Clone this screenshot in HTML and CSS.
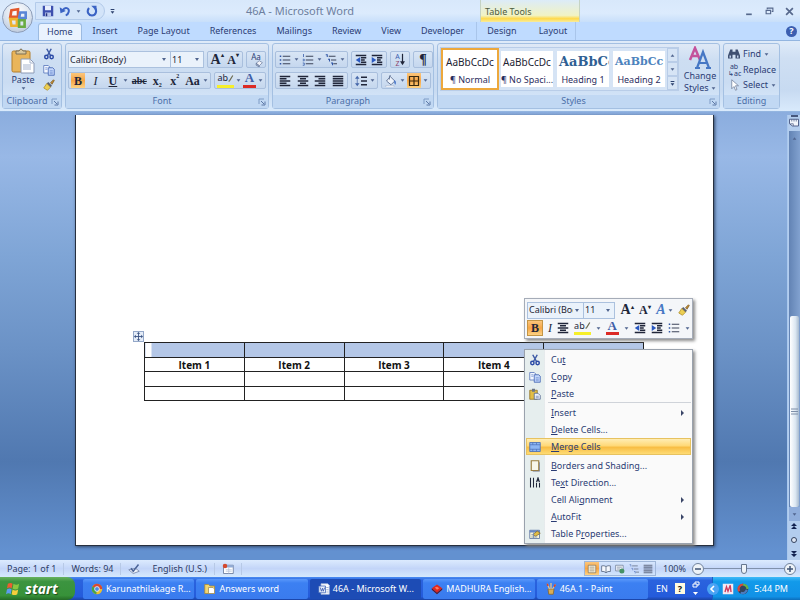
FILE: index.html
```html
<!DOCTYPE html>
<html lang="en">
<head>
  <meta charset="UTF-8">
  <meta name="viewport" content="width=device-width, initial-scale=1.0">
  <title>46A - Microsoft Word</title>
  <link rel="stylesheet" href="styles.css">
</head>
<body>
  <!-- icon sprite -->
  <svg class="sprite" aria-hidden="true">
    <symbol id="save" viewBox="0 0 16 16"><path d="M1 1h13l1 1v13H1z" fill="#3d4fae"/><path d="M4 1h8v6H4z" fill="#e8eefc"/><path d="M4 10h8v5H4z" fill="#b9c6ea"/><path d="M5 11h2v4H5z" fill="#26337c"/></symbol>
    <symbol id="undo" viewBox="0 0 16 16"><path d="M5 7c3-5 9-3 8 2-.4 2-2 4-4 5" fill="none" stroke="#3b63c4" stroke-width="2.6"/><path d="M1 3l1 8 7-3z" fill="#3b63c4"/></symbol>
    <symbol id="redo" viewBox="0 0 16 16"><path d="M4 4c-4 5 0 10 4 10 5 0 7-6 4-10" fill="none" stroke="#3b63c4" stroke-width="2.8"/><path d="M7 1h7v7z" fill="#3b63c4"/></symbol>
    <symbol id="down" viewBox="0 0 8 8"><path d="M1 2h6L4 6z" fill="#50658f"/></symbol>
    <symbol id="more" viewBox="0 0 8 8"><path d="M1 0h6v1.4H1zM1 3.500h6L4 7.500z" fill="#2c416e"/></symbol>
    <symbol id="clipboard" viewBox="0 0 24 26"><rect x="1" y="3" width="18" height="21" rx="1.500" fill="#e9b55a" stroke="#b17e2c"/><path d="M5 6V3h3q2-4 4 0h3v3z" fill="#d9c79b" stroke="#7c6f55"/><path d="M10 11h9l4 4v10H10z" fill="#fff" stroke="#8c9ab5"/><path d="M19 11v4h4M12 17h8M12 19h8M12 21h8" fill="none" stroke="#a7b4cd"/></symbol>
    <symbol id="cut" viewBox="0 0 16 16"><path d="M5 1l5 9M11 1L6 10" stroke="#3d5aa5" stroke-width="2" fill="none"/><circle cx="4.500" cy="12" r="2.200" fill="none" stroke="#2b4aa6" stroke-width="2"/><circle cx="11.500" cy="12" r="2.200" fill="none" stroke="#2b4aa6" stroke-width="2"/></symbol>
    <symbol id="copy" viewBox="0 0 16 16"><path d="M1 2h6l2 2v8H1z" fill="#f3f7ff" stroke="#4c6cb5"/><path d="M7 5h6l2 2v8H7z" fill="#c4d7fb" stroke="#3659ac"/><path d="M3 5h3M3 7h3M9 9h4M9 11h4M9 13h4" stroke="#6f8fd2"/></symbol>
    <symbol id="paste" viewBox="0 0 16 16"><path d="M1 3h10v12H1z" fill="#e2bd45" stroke="#8b6c1c"/><path d="M4 1h4v4H4z" fill="#6b7485"/><path d="M7 7h5l3 3v5H7z" fill="#eef2fb" stroke="#495d86"/><path d="M9 11h4M9 13h4" stroke="#6f81a8"/></symbol>
    <symbol id="brush" viewBox="0 0 16 16"><path d="M10 5l4-4 1 1-3 5z" fill="#c28b35" stroke="#7c5a1e"/><path d="M7 4l5 5-2 2-5-5z" fill="#5a6172"/><path d="M5 6l5 5-4 4-5-3z" fill="#eccf54" stroke="#ad8c27"/></symbol>
    <symbol id="list" viewBox="0 0 16 16"><path d="M1 2h2v2H1zM1 7h2v2H1zM1 12h2v2H1z" fill="#2f55a5"/><path d="M5 3h10M5 8h10M5 13h10" stroke="#3c445a" stroke-width="1.500"/></symbol>
    <symbol id="numlist" viewBox="0 0 16 16"><path d="M2 0v4M1 7h2v2H1M1 12h2v3H1" fill="none" stroke="#2f55a5"/><path d="M5 3h10M5 8h10M5 13h10" stroke="#3c445a" stroke-width="1.500"/></symbol>
    <symbol id="multilist" viewBox="0 0 16 16"><path d="M1 1h2v3M4 7h2v3M8 12h2v3" fill="none" stroke="#2f55a5" stroke-width="1.400"/><path d="M5 3h9M8 8h7M11 13h5" stroke="#3c445a" stroke-width="1.500"/></symbol>
    <symbol id="outdent" viewBox="0 0 16 16"><path d="M1 2h14M8 5h7M8 8h5M8 11h7M1 14h14" stroke="#20263a" stroke-width="1.900"/><path d="M7 4v8L1 8z" fill="#2a58c0"/></symbol>
    <symbol id="indent" viewBox="0 0 16 16"><path d="M1 2h14M8 5h7M8 8h5M8 11h7M1 14h14" stroke="#20263a" stroke-width="1.900"/><path d="M1 4v8l6-4z" fill="#2a58c0"/></symbol>
    <symbol id="left" viewBox="0 0 16 16"><path d="M1 2h14M1 5h9M1 8h14M1 11h9M1 14h14" stroke="#20263a" stroke-width="1.700"/></symbol>
    <symbol id="center" viewBox="0 0 16 16"><path d="M1 2h14M4 5h8M1 8h14M4 11h8M1 14h14" stroke="#20263a" stroke-width="1.700"/></symbol>
    <symbol id="right" viewBox="0 0 16 16"><path d="M1 2h14M6 5h9M1 8h14M6 11h9M1 14h14" stroke="#20263a" stroke-width="1.700"/></symbol>
    <symbol id="justify" viewBox="0 0 16 16"><path d="M1 2h14M1 5h14M1 8h14M1 11h14M1 14h14" stroke="#20263a" stroke-width="1.700"/></symbol>
    <symbol id="spacing" viewBox="0 0 16 16"><path d="M3 1L0 5h6zM3 15l-3-4h6z" fill="#4567a9"/><path d="M3 4v8" stroke="#4567a9"/><path d="M8 3h8M8 8h8M8 13h8" stroke="#20263a" stroke-width="1.700"/></symbol>
    <symbol id="arrowdown" viewBox="0 0 6 16"><path d="M3 1v12" stroke="#20263a" stroke-width="1.500"/><path d="M0 10h6l-3 5z" fill="#20263a"/></symbol>
    <symbol id="bucket" viewBox="0 0 16 16"><path d="M7 2l6 6-5 5-6-5z" fill="#eef3fb" stroke="#5b6d90" stroke-width="1.200"/><path d="M6 6V1h2" fill="none" stroke="#5b6d90"/><path d="M12 7q4 1 2 6-2-1-2-6" fill="#4c78c8"/><path d="M1 14h11v2H1z" fill="#fff" stroke="#8b9cbd" stroke-width=".5"/></symbol>
    <symbol id="border" viewBox="0 0 16 16"><path d="M2 2h12v12H2zM8 2v12M2 8h12" fill="none" stroke="#3a2a10" stroke-width="1.600"/></symbol>
    <symbol id="eraser" viewBox="0 0 18 16"><path d="M6 10l5-4 5 3-5 5z" fill="#f4f4fa" stroke="#5b6d90"/><path d="M6 10v3l5 3v-2z" fill="#aab7d2" stroke="#5b6d90"/></symbol>
    <symbol id="pen" viewBox="0 0 10 12"><path d="M8 1L3 9l-2 2" fill="none" stroke="#6d6c52" stroke-width="2"/></symbol>
    <symbol id="launch" viewBox="0 0 8 8"><path d="M1 6V1h5" fill="none" stroke="#7f9cc6"/><path d="M3 3l3 3M7 3.500V7H3.500" fill="none" stroke="#5d79a6"/></symbol>
    <symbol id="binoc" viewBox="0 0 16 16"><path d="M3 2h3v3h4V2h3l3 8v4h-6V9H6v5H0v-4z" fill="#3f5071"/><path d="M2 10h2v3H2zM12 10h2v3h-2z" fill="#c3d3ee"/></symbol>
    <symbol id="cursor" viewBox="0 0 16 16"><path d="M5 1v12l3-3 2 5 2-1-2-5h4z" fill="#fff" stroke="#6d7c98"/></symbol>
    <symbol id="merge" viewBox="0 0 16 16"><path d="M1 2h14v12H1z" fill="#8db6f3" stroke="#3d65b4"/><path d="M1 5h14M1 11h14M5 2v3M10 2v3M5 11v3M10 11v3" stroke="#4e73b9"/></symbol>
    <symbol id="shade" viewBox="0 0 16 16"><path d="M3 1h10v13H3z" fill="#f8f6ea" stroke="#9c7d3d" stroke-width="1.500"/><path d="M14 3v12H5" fill="none" stroke="#7a7f91"/></symbol>
    <symbol id="textdir" viewBox="0 0 16 16"><path d="M2 1v13M6 1v13M10 8v6M14 8v6M10 7l2-6 2 6M11 5h2" fill="none" stroke="#20263a" stroke-width="1.400"/></symbol>
    <symbol id="props" viewBox="0 0 16 16"><path d="M1 3h13v11H1z" fill="#fbf5d4" stroke="#4d679b"/><path d="M1 3h13v3H1z" fill="#6787c4"/><path d="M5 9l6-5 4 3-6 4z" fill="#e2bd45" stroke="#78663a"/><path d="M3 9h3M3 12h8M6 6v8" stroke="#7289b5"/></symbol>
    <symbol id="proof" viewBox="0 0 16 16"><path d="M1 9l6 5 8-3-5-4z" fill="#eef3fb" stroke="#6a7ba0"/><path d="M4 7l3 4 7-9" fill="none" stroke="#4a6397" stroke-width="2"/></symbol>
    <symbol id="macro" viewBox="0 0 16 16"><path d="M2 3h13v11H2z" fill="#fff" stroke="#5b6d90"/><path d="M2 3h13v3H2z" fill="#91abd7"/><path d="M5 9h8M5 11h8M9 6v8" stroke="#b6c2d8"/><circle cx="4" cy="4" r="3" fill="#d5492e"/></symbol>
    <symbol id="page" viewBox="0 0 16 16"><path d="M2 2h12v12H2z" fill="#fffbe9" stroke="#6d614b"/><path d="M4 5h8M4 8h8M4 11h8" stroke="#6d614b"/></symbol>
    <symbol id="book" viewBox="0 0 16 16"><path d="M1 3q4-1 7 1 3-2 7-1v9q-4-1-7 2-3-3-7-2zM8 4v10" fill="#f5f8fd" stroke="#596983" stroke-width="1.300"/></symbol>
    <symbol id="web" viewBox="0 0 16 16"><path d="M1 2h12v9H1z" fill="#f5f8fd" stroke="#596983"/><path d="M3 5h8M3 8h5" stroke="#596983"/><circle cx="11" cy="11" r="4" fill="#469266"/></symbol>
    <symbol id="chrome" viewBox="0 0 16 16"><circle cx="8" cy="8" r="7" fill="#e9c02f"/><path d="M8 8L2 4.500A7 7 0 0 1 15 8z" fill="#d94732"/><path d="M8 8L2 4.500A7 7 0 0 0 7 15z" fill="#46a24a"/><circle cx="8" cy="8" r="3.200" fill="#4a8ae8" stroke="#fff"/></symbol>
    <symbol id="folder" viewBox="0 0 16 16"><path d="M1 4V2h5l2 2h6v10H1z" fill="#f3d671" stroke="#ac8831"/><path d="M6 6h6l2 2v6H6z" fill="#fff" stroke="#9c8852"/></symbol>
    <symbol id="word" viewBox="0 0 16 16"><path d="M4 1h9l2 2v12H4z" fill="#fff" stroke="#a9b9db"/><path d="M1 4h9v9H1z" fill="#e8effc" stroke="#375fb3"/><path d="M3 6l1.500 5L6 7l1 4 2-5" fill="none" stroke="#2e50a8"/><path d="M11 6h3M11 9h3M11 12h3" stroke="#8299ca"/></symbol>
    <symbol id="gem" viewBox="0 0 16 16"><path d="M1 7l7-5 7 5-7 6z" fill="#e2261b"/><path d="M1 7l7 6v2L1 9zM15 7l-7 6v2l7-6z" fill="#5e1420"/><path d="M5 6l3-1 3 2-3 2z" fill="#ff7a5c"/></symbol>
    <symbol id="paint" viewBox="0 0 16 16"><path d="M4 8h8l-1 7H5z" fill="#d9ad56" stroke="#8a6424"/><path d="M6 8L3 1M8 8V0M10 8l4-6" stroke="#e3c28e" stroke-width="1.800"/><path d="M3 1l1 3M14 2l-2 3" stroke="#d3452f" stroke-width="2"/></symbol>
    <symbol id="ruler" viewBox="0 0 16 16"><path d="M2 3h12v9H6l-4-3z" fill="#f1f5fc" stroke="#50608a" stroke-width="1.300"/><path d="M5 3v3M8 3v3M11 3v3M3 9h4v3" stroke="#50608a" fill="none"/></symbol>
  </svg>

  <div class="screen">
    <header class="titlebar">
      <button class="office" aria-label="Office Button">
        <svg viewBox="0 0 20 20" fill="none" stroke-width="2.400">
          <path d="M4 3l6-1v7H3z" stroke="#e2582c"/>
          <path d="M12 5h5v5h-6z" stroke="#5b86d6"/>
          <path d="M3 11h6v6H4z" stroke="#eeb22d"/>
          <path d="M11 12h5v6h-5z" stroke="#6aac43"/>
        </svg>
      </button>
      <div class="quick">
        <button aria-label="Save"><svg class="ico"><use href="#save"/></svg></button>
        <button aria-label="Undo"><svg class="ico"><use href="#undo"/></svg></button>
        <button aria-label="Undo list"><svg class="tiny"><use href="#down"/></svg></button>
        <button aria-label="Repeat"><svg class="ico"><use href="#redo"/></svg></button>
      </div>
      <button class="customize" aria-label="Customize"><svg class="tiny"><use href="#more"/></svg></button>
      <h1>46A - Microsoft Word</h1>
      <div class="context-title">Table Tools</div>
      <div class="winbtns">
        <button aria-label="Minimize"><svg class="win" viewBox="0 0 8 8"><path d="M1 6.500h5" stroke="#56688c" stroke-width="1.500"/></svg></button>
        <button aria-label="Restore"><svg class="win" viewBox="0 0 8 8"><path d="M2 2V1h5v3H6M1 3h4v3H1z" fill="none" stroke="#56688c"/></svg></button>
        <button aria-label="Close"><svg class="win" viewBox="0 0 8 8"><path d="M1 1l6 6M7 1L1 7" stroke="#56688c" stroke-width="1.500"/></svg></button>
      </div>
    </header>

    <nav class="tabs">
      <button class="active">Home</button>
      <button>Insert</button>
      <button>Page Layout</button>
      <button>References</button>
      <button>Mailings</button>
      <button>Review</button>
      <button>View</button>
      <button>Developer</button>
      <div class="context-tabs">
        <button>Design</button>
        <button>Layout</button>
      </div>
      <button class="help" aria-label="Help">?</button>
    </nav>

    <section class="ribbon">
      <div class="group clip">
        <div class="group-body">
          <button class="big">
            <svg class="large"><use href="#clipboard"/></svg>
            <span>Paste</span>
            <svg class="tiny"><use href="#down"/></svg>
          </button>
          <div class="stack">
            <button aria-label="Cut"><svg class="ico"><use href="#cut"/></svg></button>
            <button aria-label="Copy"><svg class="ico"><use href="#copy"/></svg></button>
            <button aria-label="Format Painter"><svg class="ico"><use href="#brush"/></svg></button>
          </div>
        </div>
        <div class="group-label"><span>Clipboard</span><svg class="launch"><use href="#launch"/></svg></div>
      </div>

      <div class="group font">
        <div class="group-body rows">
          <div class="row">
            <div class="combos">
              <div class="combo name"><select aria-label="Font"><option>Calibri (Body)</option></select></div>
              <div class="combo size"><select aria-label="Font Size"><option>11</option></select></div>
            </div>
            <div class="set">
              <button class="letter grow" aria-label="Grow Font">A<sup>▴</sup></button>
              <button class="letter" aria-label="Shrink Font">A<sup>▾</sup></button>
            </div>
            <div class="set">
              <button class="clear" aria-label="Clear Formatting"><span>Aa</span><svg><use href="#eraser"/></svg></button>
            </div>
          </div>
          <div class="row">
            <div class="set wide">
              <button class="letter on">B</button>
              <button class="letter"><i>I</i></button>
              <button class="letter"><u>U</u></button>
              <svg class="tiny"><use href="#down"/></svg>
              <button class="letter small"><s>abc</s></button>
              <button class="letter">x<sub>2</sub></button>
              <button class="letter">x<sup>2</sup></button>
              <button class="letter">Aa</button>
              <svg class="tiny"><use href="#down"/></svg>
            </div>
            <div class="set">
              <button class="mark hl" aria-label="Highlight">ab<svg><use href="#pen"/></svg></button>
              <svg class="tiny"><use href="#down"/></svg>
              <button class="mark fc" aria-label="Font Color">A</button>
              <svg class="tiny"><use href="#down"/></svg>
            </div>
          </div>
        </div>
        <div class="group-label"><span>Font</span><svg class="launch"><use href="#launch"/></svg></div>
      </div>

      <div class="group para">
        <div class="group-body rows">
          <div class="row">
            <div class="set wide">
              <button aria-label="Bullets"><svg class="ico"><use href="#list"/></svg></button>
              <svg class="tiny"><use href="#down"/></svg>
              <button aria-label="Numbering"><svg class="ico"><use href="#numlist"/></svg></button>
              <svg class="tiny"><use href="#down"/></svg>
              <button aria-label="Multilevel List"><svg class="ico"><use href="#multilist"/></svg></button>
              <svg class="tiny"><use href="#down"/></svg>
            </div>
            <div class="set">
              <button aria-label="Decrease Indent"><svg class="ico"><use href="#outdent"/></svg></button>
              <button aria-label="Increase Indent"><svg class="ico"><use href="#indent"/></svg></button>
            </div>
            <div class="set">
              <button class="sort" aria-label="Sort"><span>A<br><b>Z</b></span><svg><use href="#arrowdown"/></svg></button>
            </div>
            <div class="set"><button class="letter pilcrow">¶</button></div>
          </div>
          <div class="row">
            <div class="set wide">
              <button aria-label="Align Left"><svg class="ico"><use href="#left"/></svg></button>
              <button aria-label="Center"><svg class="ico"><use href="#center"/></svg></button>
              <button aria-label="Align Right"><svg class="ico"><use href="#right"/></svg></button>
              <button aria-label="Justify"><svg class="ico"><use href="#justify"/></svg></button>
            </div>
            <div class="set">
              <button aria-label="Line Spacing"><svg class="ico"><use href="#spacing"/></svg></button>
              <svg class="tiny"><use href="#down"/></svg>
            </div>
            <div class="set">
              <button aria-label="Shading"><svg class="ico"><use href="#bucket"/></svg></button>
              <svg class="tiny"><use href="#down"/></svg>
              <button class="on" aria-label="Borders"><svg class="ico"><use href="#border"/></svg></button>
              <svg class="tiny"><use href="#down"/></svg>
            </div>
          </div>
        </div>
        <div class="group-label"><span>Paragraph</span><svg class="launch"><use href="#launch"/></svg></div>
      </div>

      <div class="group styles">
        <div class="group-body">
          <div class="gallery">
            <button class="style picked"><span class="sample">AaBbCcDc</span><span>¶ Normal</span></button>
            <button class="style"><span class="sample">AaBbCcDc</span><span>¶ No Spaci...</span></button>
            <button class="style"><span class="sample h1">AaBbCc</span><span>Heading 1</span></button>
            <button class="style"><span class="sample h2">AaBbCc</span><span>Heading 2</span></button>
            <div class="scroller">
              <button aria-label="Previous styles"><svg class="tiny flip"><use href="#down"/></svg></button>
              <button aria-label="Next styles"><svg class="tiny"><use href="#down"/></svg></button>
              <button aria-label="More styles"><svg class="tiny"><use href="#more"/></svg></button>
            </div>
          </div>
          <button class="change">
            <svg class="twin" viewBox="0 0 24 24"><path d="M2 14L7 2l5 12M4 10h6" fill="none" stroke="#c4529c" stroke-width="2.500"/><path d="M9 22l6-16 6 16M11 17h8M7 22h5M18 22h5" fill="none" stroke="#4677c4" stroke-width="2.200"/></svg>
            <span>Change</span>
            <span>Styles <svg class="tiny"><use href="#down"/></svg></span>
          </button>
        </div>
        <div class="group-label"><span>Styles</span><svg class="launch"><use href="#launch"/></svg></div>
      </div>

      <div class="group edit">
        <div class="group-body">
          <button><svg class="ico"><use href="#binoc"/></svg>Find <svg class="tiny"><use href="#down"/></svg></button>
          <button><span class="swap">ab<br>↳ac</span>Replace</button>
          <button><svg class="ico"><use href="#cursor"/></svg>Select <svg class="tiny"><use href="#down"/></svg></button>
        </div>
        <div class="group-label"><span>Editing</span></div>
      </div>
    </section>

    <main class="workspace">
      <div class="canvas">
        <article class="paper">
          <div class="table-wrap">
            <span class="move"><svg viewBox="0 0 10 10"><path d="M5 1v8M1 5h8" stroke="#3b5382"/><path d="M5 0l2 2H3zM5 10l2-2H3zM0 5l2-2v4zM10 5L8 3v4z" fill="#3b5382"/></svg></span>
            <table>
              <tr class="selected"><td></td><td></td><td></td><td></td><td></td></tr>
              <tr><th>Item 1</th><th>Item 2</th><th>Item 3</th><th>Item 4</th><th></th></tr>
              <tr class="tall"><td></td><td></td><td></td><td></td><td></td></tr>
              <tr><td></td><td></td><td></td><td></td><td></td></tr>
            </table>
          </div>

          <div class="popup">
            <div class="minibar">
              <div class="row">
                <div class="combos">
                  <div class="combo name"><select aria-label="Font"><option>Calibri (Body)</option></select></div>
                  <div class="combo size"><select aria-label="Font Size"><option>11</option></select></div>
                </div>
                <button class="letter grow" aria-label="Grow Font">A<sup>▴</sup></button>
                <button class="letter" aria-label="Shrink Font">A<sup>▾</sup></button>
                <button class="letter quickstyle" aria-label="Styles">A<svg class="tiny"><use href="#down"/></svg></button>
                <button aria-label="Format Painter"><svg class="ico"><use href="#brush"/></svg></button>
              </div>
              <div class="row">
                <button class="letter on">B</button>
                <button class="letter"><i>I</i></button>
                <button aria-label="Center"><svg class="ico"><use href="#center"/></svg></button>
                <button class="mark hl" aria-label="Highlight">ab<svg><use href="#pen"/></svg></button>
                <svg class="tiny"><use href="#down"/></svg>
                <button class="mark fc" aria-label="Font Color">A</button>
                <svg class="tiny"><use href="#down"/></svg>
                <button aria-label="Decrease Indent"><svg class="ico"><use href="#outdent"/></svg></button>
                <button aria-label="Increase Indent"><svg class="ico"><use href="#indent"/></svg></button>
                <button aria-label="Bullets"><svg class="ico"><use href="#list"/></svg></button>
                <svg class="tiny"><use href="#down"/></svg>
              </div>
            </div>
            <div class="menu" role="menu">
              <button role="menuitem"><svg class="ico"><use href="#cut"/></svg><span>Cu<u>t</u></span></button>
              <button role="menuitem"><svg class="ico"><use href="#copy"/></svg><span><u>C</u>opy</span></button>
              <button role="menuitem"><svg class="ico"><use href="#paste"/></svg><span><u>P</u>aste</span></button>
              <hr>
              <button role="menuitem" class="sub"><span><u>I</u>nsert</span></button>
              <button role="menuitem"><span><u>D</u>elete Cells...</span></button>
              <button role="menuitem" class="hot"><svg class="ico"><use href="#merge"/></svg><span><u>M</u>erge Cells</span></button>
              <hr class="blank">
              <button role="menuitem"><svg class="ico"><use href="#shade"/></svg><span><u>B</u>orders and Shading...</span></button>
              <button role="menuitem"><svg class="ico"><use href="#textdir"/></svg><span>Te<u>x</u>t Direction...</span></button>
              <button role="menuitem" class="sub"><span>Cell Ali<u>g</u>nment</span></button>
              <button role="menuitem" class="sub"><span><u>A</u>utoFit</span></button>
              <button role="menuitem"><svg class="ico"><use href="#props"/></svg><span>Table P<u>r</u>operties...</span></button>
            </div>
          </div>
        </article>
      </div>
      <div class="scrollbar">
        <div class="split"></div>
        <button aria-label="View Ruler"><svg class="ico"><use href="#ruler"/></svg></button>
        <div class="track">
          <button aria-label="Scroll up"><svg class="tiny flip"><use href="#down"/></svg></button>
          <div class="thumb"><svg viewBox="0 0 7 7"><path d="M0 1h7M0 3.500h7M0 6h7" stroke="#7d8ea8"/></svg></div>
          <button class="end" aria-label="Scroll down"><svg class="tiny"><use href="#down"/></svg></button>
        </div>
        <button class="browse" aria-label="Previous Page"><svg viewBox="0 0 8 8"><path d="M4 0l3 3H1zM4 3l3 3H1z" fill="#122250"/></svg></button>
        <button class="browse" aria-label="Select Browse Object"><svg viewBox="0 0 8 8"><circle cx="4" cy="4" r="2.500" fill="#dfe7f4" stroke="#33425f"/></svg></button>
        <button class="browse" aria-label="Next Page"><svg viewBox="0 0 8 8"><path d="M4 5L1 2h6zM4 8L1 5h6z" fill="#122250"/></svg></button>
      </div>
    </main>

    <footer class="statusbar">
      <span>Page: 1 of 1</span>
      <span>Words: 94</span>
      <span><svg class="ico"><use href="#proof"/></svg></span>
      <span class="language">English (U.S.)</span>
      <span><svg class="ico"><use href="#macro"/></svg></span>
      <div class="views">
        <button class="on" aria-label="Print Layout"><svg class="ico"><use href="#page"/></svg></button>
        <button aria-label="Full Screen Reading"><svg class="ico"><use href="#book"/></svg></button>
        <button aria-label="Web Layout"><svg class="ico"><use href="#web"/></svg></button>
        <button aria-label="Outline"><svg class="ico faded"><use href="#multilist"/></svg></button>
        <button aria-label="Draft"><svg class="ico faded"><use href="#justify"/></svg></button>
      </div>
      <label for="zoom">100%</label>
      <button class="round" aria-label="Zoom out"><svg viewBox="0 0 8 8"><path d="M1 4h6" stroke="#3f5374" stroke-width="1.500"/></svg></button>
      <input type="range" id="zoom" min="0" max="100" value="50">
      <button class="round" aria-label="Zoom in"><svg viewBox="0 0 8 8"><path d="M1 4h6M4 1v6" stroke="#3f5374" stroke-width="1.500"/></svg></button>
    </footer>

    <div class="taskbar">
      <button class="start">
        <svg viewBox="0 0 16 16"><path d="M2 3q3-2 5 0L6 8Q4 6 1 8z" fill="#ee5b32"/><path d="M8 3q3 2 6 0l-1 5q-3 2-6 0z" fill="#8ac640"/><path d="M1 9q3-2 5 0l-1 5q-2-2-5 0z" fill="#5d9bee"/><path d="M7 9q3 2 6 0l-1 5q-3 2-6 0z" fill="#f5ce3c"/></svg>
        start
      </button>
      <div class="tasks">
        <button><svg class="ico"><use href="#chrome"/></svg>Karunathilakage R...</button>
        <button><svg class="ico"><use href="#folder"/></svg>Answers word</button>
        <button class="current"><svg class="ico"><use href="#word"/></svg>46A - Microsoft W...</button>
        <button><svg class="ico"><use href="#gem"/></svg>MADHURA English...</button>
        <button><svg class="ico"><use href="#paint"/></svg>46A.1 - Paint</button>
      </div>
      <div class="lang">
        <span>EN</span>
        <span class="q">?</span>
        <svg viewBox="0 0 8 16"><path d="M3 3V1h4v3H5M1 3h4v3H1z" fill="none" stroke="#fff"/><path d="M1 11h5l-2.500 3z" fill="#fff"/></svg>
      </div>
      <div class="tray">
        <button class="expand" aria-label="Show hidden icons"><svg viewBox="0 0 8 8"><path d="M5 1L2 4l3 3" fill="none" stroke="#fff" stroke-width="1.600"/></svg></button>
        <svg class="ico" viewBox="0 0 16 16"><path d="M1 1h14v14H1z" fill="#f3e9f2"/><path d="M4 12l2-7 2 6 3-8 1 9" fill="none" stroke="#cf3a5c" stroke-width="1.800"/></svg>
        <svg class="ico" viewBox="0 0 16 16"><circle cx="8" cy="8" r="7" fill="#31445c"/><path d="M3 11A6 6 0 0 1 8 2" fill="none" stroke="#d8493a" stroke-width="3"/><path d="M8 2q6 1 6 6" fill="none" stroke="#67b14a" stroke-width="3"/><path d="M13 9q-2 6-8 4" fill="none" stroke="#4a7bc0" stroke-width="3"/></svg>
        <time>5:44 PM</time>
      </div>
    </div>
  </div>
</body>
</html>
```
FILE: styles.css
```css
* {
  box-sizing: border-box;
}

body {
  margin: 0;
  font-family: "Noto Sans", "Open Sans", sans-serif;
  font-size: 9px;
  line-height: 12px;
  color: #2b3c74;
}

button,
select {
  font: inherit;
  color: inherit;
  background: none;
  border: 0;
  padding: 0;
  margin: 0;
  white-space: nowrap;
}

button {
  display: flex;
  align-items: center;
  justify-content: center;
}

.sprite {
  display: none;
}

.ico {
  width: 12px;
  height: 12px;
  flex: none;
}

.tiny {
  width: 5px;
  height: 5px;
  flex: none;
}

.flip {
  transform: rotate(180deg);
}

.screen {
  display: flex;
  flex-direction: column;
  min-height: 100vh;
  background: #bfdbff;
}

/* title bar */
.titlebar {
  position: relative;
  display: flex;
  align-items: center;
  height: 22px;
  padding-left: 35px;
  background: linear-gradient(#d8e8fb, #dcebfd 60%, #c8dffa);
}

.office {
  position: absolute;
  z-index: 2;
  left: 2px;
  top: 2px;
  width: 31px;
  height: 31px;
  border-radius: 50%;
  border: 1px solid #8d9db8;
  background: radial-gradient(circle at 50% 30%, #fff, #dde5f0 50%, #aebdd3);
}

.office svg {
  width: 22px;
  height: 22px;
}

.quick {
  display: flex;
  align-items: center;
  gap: 5px;
  width: 70px;
  height: 18px;
  padding-left: 6px;
  border: 1px solid #b3cbea;
  border-radius: 0 9px 9px 0;
  background: #d3e4f9;
}

.customize {
  width: 15px;
}

.titlebar h1 {
  flex: 1;
  margin: 0;
  font-size: 11px;
  font-weight: normal;
  line-height: 20px;
  text-align: center;
  color: #6d7f9f;
}

.context-title {
  width: 100px;
  height: 22px;
  padding: 6px 4px 0;
  color: #4f5c40;
  border: solid #c5d3c4;
  border-width: 0 1px;
  background: linear-gradient(#dcebf8, #f1f3c4 70%, #ffd94a 85%, #f8ec9e);
}

.winbtns {
  display: flex;
  justify-content: flex-end;
  gap: 11px;
  width: 220px;
  padding-right: 6px;
}

.win {
  width: 9px;
  height: 9px;
}

/* tabs */
.tabs {
  display: flex;
  height: 18px;
  padding-left: 36px;
  background: #bfdbff;
}

.tabs button {
  padding: 0 10px;
}

.tabs .active {
  margin: 1px 1px 0 2px;
  padding: 0 8px;
  border: 1px solid #9cbbe2;
  border-bottom: 0;
  border-radius: 3px 3px 0 0;
  background: #eaf3fe;
}

.context-tabs {
  display: flex;
  gap: 2px;
  width: 100px;
  margin-left: 2px;
  border: solid #a9c5ea;
  border-width: 0 1px;
}

.tabs .help {
  align-self: center;
  width: 11px;
  height: 11px;
  margin-left: auto;
  margin-right: 3px;
  padding: 0;
  border-radius: 50%;
  font-weight: bold;
  color: #fff;
  background: #3b5eb0;
}

/* ribbon */
.ribbon {
  display: flex;
  gap: 3px;
  height: 72px;
  padding: 2px;
  border: 1px solid #93b5e0;
  border-width: 1px 0;
  background: linear-gradient(#dfebf9, #cfdff3 25%, #c7daf1 70%, #d9eafc);
}

.group {
  display: flex;
  flex-direction: column;
  border: 1px solid #a4c0e2;
  border-radius: 3px;
  background: linear-gradient(#dfe9f6, #cddef2 25%, #cadcf2 60%, #d9e9fb);
}

.group-body {
  flex: 1;
  display: flex;
  min-height: 0;
}

.group-label {
  display: flex;
  height: 13px;
  color: #4c6fa8;
  background: #c1d8f3;
}

.group-label span {
  flex: 1;
  text-align: center;
}

.launch {
  align-self: center;
  width: 8px;
  height: 8px;
  margin-right: 2px;
}

.clip {
  width: 60px;
}

.font {
  width: 204px;
}

.para {
  width: 162px;
}

.styles {
  width: 283px;
}

.edit {
  width: 57px;
}

.big {
  flex-direction: column;
  width: 40px;
}

.large {
  width: 24px;
  height: 26px;
}

.stack {
  display: flex;
  flex-direction: column;
  justify-content: space-evenly;
}

.rows {
  flex-direction: column;
  justify-content: space-evenly;
  padding: 3px 2px 2px;
}

.row {
  display: flex;
  align-items: center;
  gap: 3px;
}

.set {
  display: flex;
  align-items: center;
  gap: 2px;
  height: 17px;
  padding: 0 2px;
  border: 1px solid #a9bfdd;
  border-radius: 2px;
  background: linear-gradient(#d8e5f5, #c5d7ee);
}

.set button {
  height: 15px;
  min-width: 14px;
}

.set.wide {
  flex: 1;
  justify-content: space-between;
}

.combos {
  display: flex;
  flex: 1;
}

.combo {
  position: relative;
  border: 1px solid #abc1de;
  background: #eaf2fb;
}

.combo + .combo {
  border-left: 0;
}

.combo::after {
  content: "";
  position: absolute;
  right: 4px;
  top: 6px;
  border: solid transparent;
  border-width: 3px 2px 0;
  border-top-color: #50658f;
}

.combo select {
  appearance: none;
  display: block;
  width: 100%;
  height: 15px;
  padding: 0 10px 0 1px;
  color: #1d2433;
}

.combo.name {
  flex: 1;
}

.combo.size {
  width: 33px;
}

.letter {
  font-family: "Liberation Serif", serif;
  font-size: 12px;
  font-weight: bold;
  color: #20263a;
}

.letter i {
  font-weight: normal;
}

.letter sup,
.letter sub {
  font-size: 6px;
  line-height: 6px;
}

.letter sup {
  align-self: flex-start;
}

.letter sub {
  align-self: flex-end;
}

.letter.grow {
  font-size: 14px;
}

.letter.small {
  font-size: 10px;
}

.letter.pilcrow {
  font-size: 14px;
}

.on {
  background: linear-gradient(#fbc67c, #f6a546 50%, #fdd283);
}

.clear {
  position: relative;
}

.clear span {
  font-size: 8px;
  line-height: 10px;
  align-self: start;
}

.clear svg {
  position: absolute;
  left: 3px;
  bottom: 0;
  width: 12px;
  height: 10px;
}

.mark {
  height: 14px;
  line-height: 10px;
  padding-bottom: 2px;
}

.mark svg {
  width: 6px;
  height: 9px;
}

.hl {
  color: #20263a;
  border-bottom: 3px solid #f6ef2a;
}

.fc {
  font-family: "Liberation Serif", serif;
  font-size: 13px;
  font-weight: bold;
  color: #3f5ea8;
  border-bottom: 3px solid #dc2a25;
}

.mark.fc {
  min-width: 13px;
}

.sort span {
  font-size: 7px;
  line-height: 7px;
  color: #3b5eb0;
}

.sort b {
  font-weight: normal;
  color: #8c3f6b;
}

.sort svg {
  width: 5px;
  height: 13px;
}

/* style gallery */
.gallery {
  flex: 1;
  display: flex;
  min-width: 0;
  margin: 3px 2px 4px;
  border: 1px solid #b9cde8;
  background: #d6e4f5;
}

.style {
  flex: 1;
  flex-direction: column;
  justify-content: space-around;
  min-width: 0;
  margin: 3px 2px;
  background: #fff;
  color: #2b2d5e;
  overflow: hidden;
}

.style.picked {
  flex-grow: 1;
  margin: 0;
  padding: 1px;
  border: 2px solid #eda83c;
}

.sample {
  width: 100%;
  padding-left: 2px;
  overflow: hidden;
  font-size: 10px;
  line-height: 18px;
  text-align: left;
  color: #1d2433;
}

.sample.h1 {
  font: bold 13px/18px "DejaVu Serif", serif;
  color: #2f5f93;
}

.sample.h2 {
  font: bold 11px/18px "DejaVu Serif", serif;
  color: #4d83bd;
}

.scroller {
  display: flex;
  flex-direction: column;
  width: 11px;
}

.scroller button {
  flex: 1;
  border: 1px solid #b9cde8;
}

.change {
  flex: none;
  flex-direction: column;
  width: 38px;
}

.twin {
  width: 24px;
  height: 24px;
}

.edit .group-body {
  flex-direction: column;
  justify-content: space-between;
  padding: 4px 0 4px 4px;
}

.edit button {
  justify-content: flex-start;
  gap: 3px;
}

.swap {
  width: 12px;
  font-size: 7px;
  line-height: 7px;
}

/* document area */
.workspace {
  flex: 1;
  display: flex;
  padding-top: 3px;
  background: linear-gradient(#8badde, #98b8e6 10%, #7fa5d6 32%, #6b92c6 53%, #5078b0 78%, #6391d0 98%);
}

.canvas {
  flex: 1;
  padding: 0 73px 14px 75px;
}

.paper {
  position: relative;
  height: 100%;
  padding: 227px 69px 0 68px;
  border: 1px solid #27303f;
  border-top: 0;
  background: #fff;
  box-shadow: 1px 1px 3px #33486b;
}

.table-wrap {
  position: relative;
}

.move {
  position: absolute;
  left: -11px;
  top: -11px;
  width: 11px;
  height: 11px;
  border: 1px solid #94a8c9;
  background: #e5edf8;
}

.move svg {
  display: block;
  width: 9px;
  height: 9px;
}

table {
  width: 100%;
  table-layout: fixed;
  border-collapse: collapse;
  font-family: "Open Sans", sans-serif;
  font-size: 10px;
  color: #111;
}

td,
th {
  height: 14px;
  padding: 0;
  line-height: 12px;
  border: 1px solid #222;
}

.selected td,
.tall td {
  height: 15px;
}

.selected td {
  background: #b4c7e7;
}

.selected td:first-child {
  background: linear-gradient(to right, #fff 6px, #b4c7e7 6px);
}

/* mini toolbar and context menu, floating over the page */
.popup {
  position: absolute;
  left: 448px;
  top: 183px;
  width: 169px;
}

.minibar {
  height: 41px;
  margin-bottom: 10px;
  padding: 2px;
  border: 1px solid #a5acb8;
  background: #f4f6f9;
  box-shadow: 2px 2px 3px #8c8c8c;
}

.minibar .row {
  height: 18px;
  gap: 2px;
  justify-content: space-between;
}

.minibar .combos {
  flex: none;
  width: 88px;
}

.minibar .combo.size {
  width: 31px;
}

.minibar .on {
  width: 16px;
  height: 16px;
  border: 1px solid #c49545;
}

.minibar .quickstyle {
  font-size: 14px;
  font-style: italic;
  color: #4677c4;
  gap: 2px;
}

.menu {
  padding: 1px;
  border: 1px solid #9aa2ad;
  background: linear-gradient(to right, #e6eeee 19px, #d3dbdf 19px, #fafafa 20px);
  box-shadow: 2px 2px 3px #8c8c8c;
}

.menu button {
  position: relative;
  width: 100%;
  height: 17px;
  justify-content: flex-start;
}

.menu .ico {
  margin-left: 3px;
  margin-right: -15px;
}

.menu span {
  margin-left: 25px;
}

.menu .sub::after {
  content: "";
  margin-left: auto;
  margin-right: 7px;
  border: solid transparent;
  border-width: 3px 0 3px 3px;
  border-left-color: #3b4668;
}

.menu .hot {
  background: linear-gradient(#fff0bd, #ffd978 45%, #f8bd44 55%, #ffe07c);
  outline: 1px solid #e7c260;
  outline-offset: -1px;
}

.menu hr {
  height: 1px;
  margin: 0 0 1px 22px;
  border: 0;
  background: #cfd3d9;
}

.menu .blank {
  background: none;
}

/* vertical scroll bar */
.scrollbar {
  display: flex;
  flex-direction: column;
  align-items: center;
  width: 13px;
  border-left: 1px solid #a9c8ee;
  background: #b3cdee;
}

.split {
  width: 7px;
  height: 2px;
  background: #46577d;
}

.track {
  flex: 1;
  display: flex;
  flex-direction: column;
  align-items: center;
  width: 11px;
  margin-top: 2px;
  background: linear-gradient(to right, #6283b4, #82a2d0);
}

.track button {
  height: 14px;
}

.track .end {
  width: 100%;
  background: #8faddb;
}

.thumb {
  display: flex;
  align-items: center;
  justify-content: center;
  height: 49%;
  width: 9px;
  margin-top: auto;
  border-radius: 2px;
  background: linear-gradient(to right, #fff, #dce7f2 60%, #a7bacf);
}

.thumb svg {
  width: 7px;
  height: 7px;
}

.browse svg {
  width: 8px;
  height: 8px;
  margin: 2px 0 3px;
}

/* status bar */
.statusbar {
  display: flex;
  align-items: center;
  height: 17px;
  padding: 0 4px 0 0;
  background: linear-gradient(#dcebfe, #c3d5f8 50%, #d5e9fd);
  color: #2d3c66;
}

.statusbar > span {
  display: flex;
  padding: 0 7px;
  border-right: 1px solid #b7c9e6;
}

.statusbar > span:nth-child(3) {
  padding-right: 4px;
  border-right: 0;
}

.statusbar .language {
  padding-left: 8px;
}

.views {
  display: flex;
  margin-left: auto;
  border: 1px solid #9fb6d8;
}

.views button {
  width: 14px;
  height: 13px;
}

.views .ico {
  width: 10px;
  height: 10px;
}

.faded {
  opacity: 0.6;
}

.statusbar label {
  margin: 0 6px 0 7px;
}

.round {
  width: 12px;
  height: 12px;
  border: 1px solid #71839d;
  border-radius: 50%;
  background: #eef3f8;
}

.round svg {
  width: 8px;
  height: 8px;
}

#zoom {
  appearance: none;
  width: 80px;
  height: 12px;
  margin: 0;
  background: linear-gradient(#7f90ab, #7f90ab) center / 100% 1px no-repeat;
}

#zoom::-webkit-slider-thumb {
  appearance: none;
  width: 6px;
  height: 10px;
  border: 1px solid #66778f;
  border-radius: 0 0 3px 3px;
  background: #eef3f8;
}

/* task bar */
.taskbar {
  display: flex;
  height: 23px;
  font-size: 9px;
  color: #fff;
  background: linear-gradient(#4a8cf2, #2a63de 15%, #245bdb 85%, #1a43a4);
}

.start {
  gap: 4px;
  width: 75px;
  padding-right: 11px;
  border-radius: 0 8px 8px 0;
  font: italic bold 14px/18px "Open Sans", sans-serif;
  text-shadow: 1px 1px 1px #1d4a1d;
  background: linear-gradient(#68b25f, #3c9440 20%, #379239 80%, #246a26);
}

.start svg {
  width: 15px;
  height: 15px;
}

.tasks {
  flex: 1;
  display: flex;
  gap: 2px;
  padding: 2px 0 1px 8px;
}

.tasks button {
  flex: 1;
  gap: 3px;
  justify-content: flex-start;
  padding-left: 8px;
  border-radius: 2px;
  background: linear-gradient(#5a98fa, #3c80f2 20%, #3a7bee);
}

.tasks .current {
  background: #1d4cb5;
}

.lang {
  display: flex;
  align-items: center;
  gap: 7px;
  width: 64px;
  padding-left: 8px;
}

.lang svg {
  width: 8px;
  height: 16px;
}

.q {
  width: 10px;
  font-weight: bold;
  line-height: 11px;
  text-align: center;
  color: #111;
  background: #fffbe0;
}

.tray {
  display: flex;
  align-items: center;
  gap: 3px;
  width: 88px;
  border-left: 1px solid #1a5fc0;
  background: linear-gradient(#3fbaf8, #129aea 20%, #1191e6 85%, #0d6dba);
}

.tray time {
  margin-left: auto;
  margin-right: 12px;
}

.expand {
  width: 12px;
  height: 12px;
  margin-left: -6px;
  border-radius: 50%;
  background: #4aa3f4;
}

.expand svg {
  width: 8px;
  height: 8px;
}
```
